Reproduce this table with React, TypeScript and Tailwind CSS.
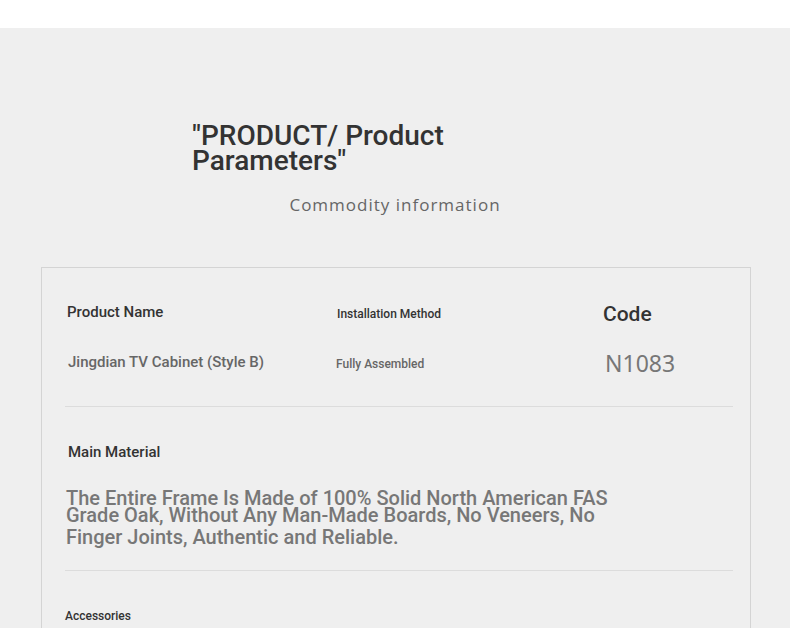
export default function App() {
    return (
        <div className="min-h-screen bg-[#efefef] font-['Roboto',sans-serif]">
            <div className="h-[28px] bg-white" />

            {/* Heading */}
            <div className="pt-[95px] pl-[192px]">
                <h1 className="w-[290px] text-[28px] font-medium leading-[25px] text-[#333]">
                    "PRODUCT/ Product Parameters"
                </h1>
            </div>
            <p className="mt-[19px] text-center text-[17px] tracking-[1px] text-[#666] font-['Open_Sans',sans-serif]">
                Commodity information
            </p>

            {/* Parameters card */}
            <div className="ml-[41px] mr-[39px] mt-[49px] border border-[#d4d4d4] pl-[23px] pr-[17px] pt-[30px]">
                <div className="flex border-b border-[#dcdcdc] pb-[28px]">
                    <div className="w-[272px] pl-[2px]">
                        <div className="h-[30px] flex items-center text-[15px] font-medium text-[#333]">Product Name</div>
                        <div className="mt-[20px] h-[30px] flex items-center pl-[1px] text-[15px] font-medium text-[#666]">
                            Jingdian TV Cabinet (Style B)
                        </div>
                    </div>
                    <div className="w-[266px]">
                        <div className="h-[30px] flex items-center pt-[3px] text-[12px] font-medium text-[#333]">Installation Method</div>
                        <div className="mt-[20px] h-[30px] flex items-center pt-[2px] -ml-[1px] text-[12px] font-medium text-[#666]">
                            Fully Assembled
                        </div>
                    </div>
                    <div className="flex-1">
                        <div className="h-[30px] flex items-center pt-[5px] text-[21px] font-medium text-[#333]">Code</div>
                        <div className="mt-[20px] h-[30px] flex items-center pt-[2px] pl-[2px] text-[23px] text-[#777] font-['Noto_Sans',sans-serif]">
                            N1083
                        </div>
                    </div>
                </div>

                <div className="border-b border-[#dcdcdc] pt-[31px] pb-[22px]">
                    <div className="h-[30px] flex items-center pl-[3px] text-[15px] font-medium text-[#333]">Main Material</div>
                    <div className="mt-[14px] w-[560px] pl-[1px] text-[20px] font-medium text-[#777]">
                        <div className="leading-[12px] pt-[10px]">The Entire Frame Is Made of 100% Solid North American FAS</div>
                        <div className="leading-[22px]">
                            Grade Oak, Without Any Man-Made Boards, No Veneers, No Finger Joints, Authentic and Reliable.
                        </div>
                    </div>
                </div>

                <div className="pt-[32px] pb-[20px]">
                    <div className="h-[26px] flex items-center text-[12px] font-medium text-[#333]">Accessories</div>
                </div>
            </div>
        </div>
    );
}
